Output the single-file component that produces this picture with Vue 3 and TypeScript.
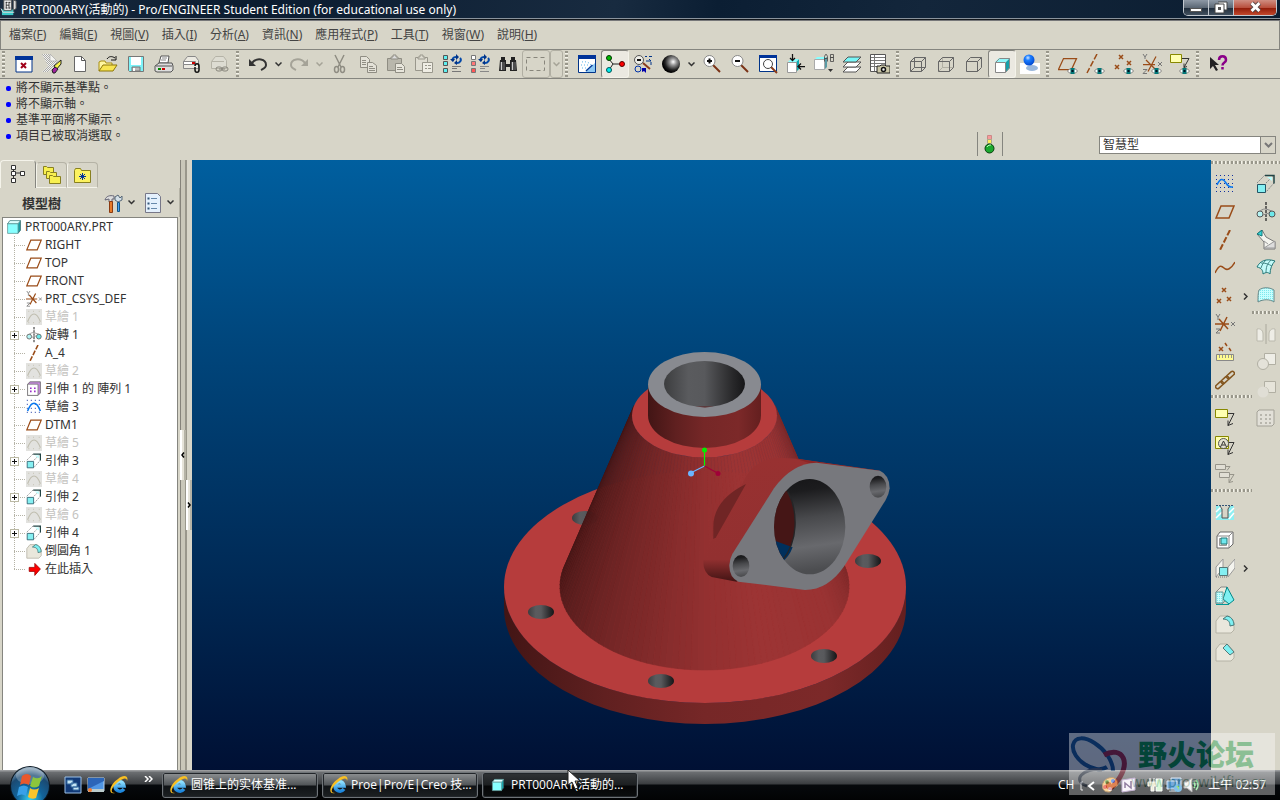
<script setup lang="ts">
import { ref } from 'vue'

interface Tool { id: string; label: string; chev?: boolean; off?: boolean; pressed?: boolean; boxed?: boolean }
interface Row { icon: string; text: string; plus?: boolean; dim?: boolean }

const menus: [string, string][] = [
  ['檔案', 'F'], ['編輯', 'E'], ['視圖', 'V'], ['插入', 'I'], ['分析', 'A'],
  ['資訊', 'N'], ['應用程式', 'P'], ['工具', 'T'], ['視窗', 'W'], ['說明', 'H'],
]

const groups: Tool[][] = [
  [
    { id: 'closewin', label: 'Close window' }, { id: 'erase', label: 'Erase' }, { id: 'new', label: 'New' },
    { id: 'open', label: 'Open' }, { id: 'save', label: 'Save' }, { id: 'print', label: 'Print' },
    { id: 'mail', label: 'Mail' }, { id: 'maillink', label: 'Mail link', off: true },
  ],
  [
    { id: 'undo', label: 'Undo', chev: true }, { id: 'redo', label: 'Redo', chev: true, off: true },
    { id: 'cut', label: 'Cut', off: true }, { id: 'copy', label: 'Copy', off: true },
    { id: 'paste', label: 'Paste', off: true }, { id: 'pastesp', label: 'Paste special', off: true },
    { id: 'regen', label: 'Regenerate' }, { id: 'regenm', label: 'Regenerate manager' },
    { id: 'find', label: 'Find' }, { id: 'selbox', label: 'Select box', chev: true, off: true, boxed: true },
  ],
  [
    { id: 'repaint', label: 'Repaint' }, { id: 'spin', label: 'Spin center', pressed: true },
    { id: 'orient', label: 'Orient mode' }, { id: 'sphere', label: 'Appearance', chev: true },
    { id: 'zoomin', label: 'Zoom in' }, { id: 'zoomout', label: 'Zoom out' }, { id: 'refit', label: 'Refit' },
    { id: 'reorient', label: 'Reorient' }, { id: 'views', label: 'Saved views' }, { id: 'layers', label: 'Layers' },
    { id: 'viewmgr', label: 'View manager' },
  ],
  [
    { id: 'wire', label: 'Wireframe' }, { id: 'hidden', label: 'Hidden line' }, { id: 'nohidden', label: 'No hidden' },
    { id: 'shade', label: 'Shading', pressed: true }, { id: 'render', label: 'Enhanced realism' },
  ],
  [
    { id: 'planeeye', label: 'Planes' }, { id: 'axiseye', label: 'Axes' }, { id: 'ptseye', label: 'Points' },
    { id: 'csyseye', label: 'Coordinate systems' }, { id: 'noteeye', label: 'Annotations' },
  ],
  [{ id: 'help', label: 'Context help' }],
]

const messages = ['將不顯示基準點。', '將不顯示軸。', '基準平面將不顯示。', '項目已被取消選取。']

const rows: Row[] = [
  { icon: 'plane', text: 'RIGHT' }, { icon: 'plane', text: 'TOP' }, { icon: 'plane', text: 'FRONT' },
  { icon: 'csys', text: 'PRT_CSYS_DEF' }, { icon: 'sketchoff', text: '草繪 1', dim: true },
  { icon: 'revolve', text: '旋轉 1', plus: true }, { icon: 'axis', text: 'A_4' },
  { icon: 'sketchoff', text: '草繪 2', dim: true }, { icon: 'pattern', text: '引伸 1 的 陣列 1', plus: true },
  { icon: 'sketchs', text: '草繪 3' }, { icon: 'plane', text: 'DTM1' },
  { icon: 'sketchoff', text: '草繪 5', dim: true }, { icon: 'extrude', text: '引伸 3', plus: true },
  { icon: 'sketchoff', text: '草繪 4', dim: true }, { icon: 'extrude', text: '引伸 2', plus: true },
  { icon: 'sketchoff', text: '草繪 6', dim: true }, { icon: 'extrude', text: '引伸 4', plus: true },
  { icon: 'round', text: '倒圓角 1' }, { icon: 'insert', text: '在此插入' },
]

const datum: Tool[][] = [
  [
    { id: 'sketch', label: 'Sketch' }, { id: 'plane', label: 'Plane' }, { id: 'axis', label: 'Axis' },
    { id: 'curve', label: 'Curve' }, { id: 'pts', label: 'Point', chev: true }, { id: 'csys', label: 'Csys' },
    { id: 'analysis', label: 'Analysis' }, { id: 'chain', label: 'Reference' },
  ],
  [{ id: 'note', label: 'Note' }, { id: 'notea', label: 'Annotation' }, { id: 'noteb', label: 'Propagate', off: true }],
  [
    { id: 'hole', label: 'Hole' }, { id: 'shell', label: 'Shell' }, { id: 'rib', label: 'Rib', chev: true },
    { id: 'draft', label: 'Draft' }, { id: 'round', label: 'Round' }, { id: 'chamfer', label: 'Chamfer' },
  ],
]
const features: Tool[][] = [
  [
    { id: 'extrude', label: 'Extrude' }, { id: 'revolve', label: 'Revolve' }, { id: 'sweep', label: 'Sweep' },
    { id: 'boundary', label: 'Boundary blend' }, { id: 'style', label: 'Style' },
  ],
  [
    { id: 'mirror', label: 'Mirror', off: true }, { id: 'merge', label: 'Merge', off: true },
    { id: 'trim', label: 'Trim', off: true }, { id: 'patterng', label: 'Pattern', off: true },
  ],
]

const filter = ref('智慧型')

const tasks = [
  { icon: 'ie', text: '圆锥上的实体基准...', active: false },
  { icon: 'ie', text: 'Proe|Pro/E|Creo 技...', active: false },
  { icon: 'part', text: 'PRT000ARY(活動的...', active: true },
]

/* Lateral surface of the cone, shaded strip by strip from left to right. */
const stops: [number, number[]][] = [
  [0, [66, 21, 21]], [0.12, [86, 28, 28]], [0.3, [116, 38, 38]], [0.5, [146, 48, 48]],
  [0.62, [156, 52, 52]], [0.8, [154, 51, 51]], [1, [122, 40, 40]],
]
function tone(u: number): string {
  let i = 1
  while (i < stops.length - 1 && u > stops[i][0]) i++
  const [a, ca] = stops[i - 1]
  const [b, cb] = stops[i]
  const k = (u - a) / (b - a)
  return 'rgb(' + ca.map((c, n) => Math.round(c + (cb[n] - c) * k)).join(',') + ')'
}
function pt(rx: number, ry: number, cy: number, deg: number): string {
  const r = (deg * Math.PI) / 180
  return (704.5 + rx * Math.cos(r)).toFixed(2) + ',' + (cy + ry * Math.sin(r)).toFixed(2)
}
const N = 80
const strips = Array.from({ length: N }, (_, i) => {
  const a = 194 - (208 * i) / N
  const b = 194 - (208 * (i + 1)) / N
  return {
    points: [pt(72.5, 42, 415.5, a), pt(144.5, 83.5, 586.5, a), pt(144.5, 83.5, 586.5, b), pt(72.5, 42, 415.5, b)].join(' '),
    fill: tone((i + 0.5) / N),
  }
})
const holes = [[585, 518], [541, 612], [661, 681], [824, 656], [868, 561]]
</script>

<template>
  <div class="desktop">
    <svg class="defs" aria-hidden="true">
      <defs>
        <radialGradient id="gSphere" cx=".62" cy=".38" r=".6"><stop offset="0" stop-color="#fff" /><stop offset=".3" stop-color="#999" /><stop offset=".75" stop-color="#222" /><stop offset="1" stop-color="#000" /></radialGradient>
        <radialGradient id="gBlue" cx=".4" cy=".3" r=".7"><stop offset="0" stop-color="#cfe6ff" /><stop offset=".35" stop-color="#1b7dff" /><stop offset="1" stop-color="#0048d0" /></radialGradient>
        <linearGradient id="gIe" x2="0" y2="1"><stop offset="0" stop-color="#8fe0ff" /><stop offset="1" stop-color="#1c86dc" /></linearGradient>
        <radialGradient id="gOrb" cx=".5" cy=".85" r=".85"><stop offset="0" stop-color="#35d0f0" /><stop offset=".4" stop-color="#12639a" /><stop offset=".75" stop-color="#1b4a72" /><stop offset="1" stop-color="#9fb4c4" /></radialGradient>
        <pattern id="pDither" width="2" height="2" patternUnits="userSpaceOnUse"><rect width="2" height="2" fill="#f4f4f0" /><rect width="1" height="1" fill="#aaa" /><rect x="1" y="1" width="1" height="1" fill="#aaa" /></pattern>
        <pattern id="pCyan" width="2" height="2" patternUnits="userSpaceOnUse"><rect width="2" height="2" fill="#c8ffff" /><rect width="1" height="1" fill="#7de8ee" /></pattern>
        <pattern id="pDots" width="4" height="4" patternUnits="userSpaceOnUse"><rect x="1" y="1" width="1" height="1" fill="#1030a0" /></pattern>
        <pattern id="pDotsBig" width="5" height="5" patternUnits="userSpaceOnUse"><rect x="1" y="1" width="1.250" height="1.250" fill="#1030a0" /></pattern>
      </defs>

      <symbol id="eye" viewBox="0 0 10 6"><path d="M0 3 2 1h6l2 2-2 2H2z" fill="#fff" stroke="#666" stroke-width=".8" /><path d="M3 0h4v6H3z" fill="#077" /><path d="M4 2h2v2H4z" fill="#012" /></symbol>

      <symbol id="closewin" viewBox="0 0 20 20"><path d="M2 3h16v15H2z" fill="#fff" stroke="#038" /><path d="M1 2h18v4H1z" fill="#039" /><path d="m7 9 5 5m0-5-5 5" stroke="#a00018" stroke-width="2" /></symbol>
      <symbol id="erase" viewBox="0 0 20 20"><path d="M0 0h8l8 8-7 7-3 3H0l6-6z" fill="url(#pDither)" /><path d="M8 0v7h7z" fill="#f4f4f0" stroke="#aaa" stroke-width=".7" /><path d="m12 12 7-6v4l-5 6z" fill="#f7f24a" stroke="#222" /><path d="m10 16 3-3 3 2-3 4h-2z" fill="#a020a0" stroke="#222" /></symbol>
      <symbol id="new" viewBox="0 0 20 20"><path d="M4.500 2.500h7l4 4v11h-11z" fill="#fff" stroke="#666" /><path d="M11.500 2.500v4h4" fill="none" stroke="#555" /></symbol>
      <symbol id="open" viewBox="0 0 20 20"><path d="M1 17V8l2-1h4l1 2h6v3" fill="#fff6a0" stroke="#a88e10" /><path d="m1 17 4-6h14l-4 6z" fill="#f8e552" stroke="#8d7608" /><path d="M9 5c2-3 5-3 8-1m1-2v4h-5" fill="none" stroke="#111" /></symbol>
      <symbol id="save" viewBox="0 0 20 20"><path d="M2.500 2.500h15v15h-14l-1-1z" fill="#7df3f8" stroke="#777" /><path d="M5 3h10v8H5z" fill="#fff" /><path d="M6 13h8v4H6z" fill="#bbb" stroke="#777" /><path d="M7 14h2v3H7z" fill="#fff" /></symbol>
      <symbol id="print" viewBox="0 0 20 20"><path d="M5 9 7 2h8l-1 7z" fill="#fff" stroke="#555" /><path d="M8 4h5M7 6h5" stroke="#888" /><path d="m1 12 4-3h13l1 3v4l-2 2H3l-2-1z" fill="#ddd" stroke="#555" /><path d="M2 12h16" stroke="#555" /><path d="M4 15h3" stroke="#080" stroke-width="2" /><path d="M8 15h3" stroke="#c00" stroke-width="2" /></symbol>
      <symbol id="mail" viewBox="0 0 20 20"><path d="M1.500 7.500l4-5h8l3 4v8h-15z" fill="#eceae2" stroke="#888" /><path d="M1.500 7.500h12v3h-12z" fill="#fff" stroke="#888" /><path d="M10 9h3" stroke="#c00" stroke-width="2" /><path d="M13 12c0-3 4-3 4 0v4c0 3-4 3-4 0v-3" fill="none" stroke="#111" stroke-width="1.500" /></symbol>
      <symbol id="maillink" viewBox="0 0 20 20"><path d="M1.500 7.500l4-5h8l3 4v8h-15z" fill="#dddcd2" stroke="#b5b3a7" /><path d="M2 7.500h12" stroke="#b5b3a7" /><rect x="6" y="13" width="6" height="4" rx="2" fill="none" stroke="#88867c" /><rect x="12" y="13" width="6" height="4" rx="2" fill="none" stroke="#88867c" /><path d="M9 15h6" stroke="#88867c" /></symbol>
      <symbol id="undo" viewBox="0 0 20 20"><path d="M1 5v7h7z" fill="#333" /><path d="M4 9c5-6 14-4 14 2 0 3-3 4-5 5" fill="none" stroke="#333" stroke-width="2" /></symbol>
      <symbol id="redo" viewBox="0 0 20 20"><path d="M19 5v7h-7z" fill="#a5a398" /><path d="M16 9C11 3 2 5 2 11c0 3 3 4 5 5" fill="none" stroke="#a5a398" stroke-width="2" /></symbol>
      <symbol id="cut" viewBox="0 0 20 20"><g fill="none" stroke="#8f8d83" stroke-width="1.500"><path d="m5 1 6 12M14 1 8 13" /><ellipse cx="6.500" cy="15.500" rx="2" ry="3" /><ellipse cx="12.500" cy="15.500" rx="2" ry="3" /></g></symbol>
      <symbol id="copy" viewBox="0 0 20 20"><g fill="#e4e2d8" stroke="#8f8d83"><path d="M2.500 2.500h6l3 3v8h-9z" /><path d="M9.500 8.500h5l4 3v7h-9z" /><path d="M4 6.500h4M4 8.500h4M4 10.500h4M11 12.500h4M11 14.500h6M11 16.500h6" /></g></symbol>
      <symbol id="paste" viewBox="0 0 20 20"><g fill="#b9b7ac" stroke="#8f8d83"><path d="M1.500 4.500h14v12h-14z" /><path d="M5 5V3h2V1h3v2h2v2z" fill="#ddd" /><path d="M9.500 9.500h6l3 3v6h-9z" fill="#e8e6dc" /><path d="M11 13.500h5M11 15.500h6" /></g></symbol>
      <symbol id="pastesp" viewBox="0 0 20 20"><g fill="#dedcd1" stroke="#99978c"><path d="M1.500 3.500h12v13h-12z" /><path d="M4 5V3h2V1h3v2h2v2z" /><path d="M8.500 8.500h10v10h-10z" fill="#efede4" /><path d="M11 11.500h2M14 11.500h3M11 14.500h2M14 14.500h3" /></g></symbol>
      <symbol id="regen" viewBox="0 0 20 20"><g fill="#5df0f0" stroke="#555"><path d="M1.500 1.500h4v4h-4zM1.500 7.500h4v4h-4zM1.500 14.500h4v4h-4z" /></g><path d="M11 7c-1-2 0-4 3-4m4 1c2 2 0 5-3 5" fill="none" stroke="#0348a8" stroke-width="2" /><path d="m14 0 3 3-3 3zM15 6l-3 3 3 2zM8 5h5l-2 3z" fill="#038" /><path d="M10 12.500h9M10 14.500h5M10 17.500h9" stroke="#777" /></symbol>
      <symbol id="regenm" viewBox="0 0 20 20"><g stroke="#777"><path d="M1.500 1.500h4v4h-4z" fill="#fff" /><path d="M1.500 7.500h4v4h-4z" fill="#f77" /><path d="M1.500 14.500h4v4h-4z" fill="#f55" /></g><path d="M11 7c-1-2 0-4 3-4m4 1c2 2 0 5-3 5" fill="none" stroke="#0348a8" stroke-width="2" /><path d="m14 0 3 3-3 3zM15 6l-3 3 3 2zM8 5h5l-2 3z" fill="#038" /><path d="M10 12.500h9M10 14.500h5M10 17.500h9" stroke="#888" /></symbol>
      <symbol id="find" viewBox="0 0 20 20"><path d="M3 3h4v3H3zM13 3h4v3h-4zM2 6h6v4h4V6h6l1 11h-7v-4H8v4H1z" fill="#222" /><path d="M3.500 8v8M14.500 8v8" stroke="#ccc" stroke-width="1.500" /><path d="M6 8v8M17 8v8" stroke="#777" /></symbol>
      <symbol id="selbox" viewBox="0 0 20 20"><rect x=".5" y="3.500" width="18" height="13" fill="none" stroke="#88867c" stroke-dasharray="4 3" /></symbol>

      <symbol id="repaint" viewBox="0 0 20 20"><path d="M1.500 2.500h17v16h-17z" fill="#fff" stroke="#038" /><path d="M1 1h18v4H1z" fill="#039" /><path d="M8 18c5-2 6-6 10-9v9z" fill="#8cc8f4" /><path d="M5 8c4-1 8 1 9 3m-10 0h8m-7 3h6" fill="none" stroke="#58b4e8" stroke-dasharray="1 2" /><path d="M15.500 11 9 17" stroke="#003c9c" stroke-width="1.500" /></symbol>
      <symbol id="spin" viewBox="0 0 20 20"><path d="m4 5 4 5-4 6m4-6h9" fill="none" stroke="#222" /><circle cx="4" cy="4" r="2.500" fill="#0b0" stroke="#030" /><circle cx="17" cy="10" r="2.500" fill="#f00" stroke="#500" /><circle cx="4" cy="16" r="2.500" fill="#0ee" stroke="#055" /></symbol>
      <symbol id="orient" viewBox="0 0 20 20"><path d="m10 9 7 6" stroke="#8a3c1a" stroke-width="2" /><circle cx="6" cy="6" r="4.500" fill="#eeeee8" stroke="#555" /><path d="M4 6h4" stroke="#111" stroke-width="2" /><path d="M12 2.500h2m2 0h3M13 7h5l-2-2m2 3v3" fill="none" stroke="#038" /><circle cx="5" cy="15" r="3" fill="none" stroke="#03a" /><path d="M9 14h4v5l-2-2-2 1z" fill="#00a" /></symbol>
      <symbol id="sphere" viewBox="0 0 20 20"><circle cx="10" cy="10" r="9" fill="url(#gSphere)" /></symbol>
      <symbol id="zoomin" viewBox="0 0 20 20"><path d="m11 11 7 7" stroke="#7a3216" stroke-width="2" /><circle cx="7.500" cy="7" r="5.500" fill="#fff" stroke="#888" /><path d="M5 7h5M7.500 4.500v5" stroke="#111" stroke-width="2" /></symbol>
      <symbol id="zoomout" viewBox="0 0 20 20"><path d="m11 11 7 7" stroke="#7a3216" stroke-width="2" /><circle cx="7.500" cy="7" r="5.500" fill="#fff" stroke="#888" /><path d="M5 7h5" stroke="#111" stroke-width="2" /></symbol>
      <symbol id="refit" viewBox="0 0 20 20"><path d="M1.500 2.500h17v15h-17z" fill="#fff" stroke="#038" /><path d="M1 1h18v3H1z" fill="#039" /><path d="m13 13 6 6" stroke="#8a3c1a" stroke-width="2" /><circle cx="10" cy="10" r="4.500" fill="#fff" stroke="#444" /></symbol>
      <symbol id="reorient" viewBox="0 0 20 20"><path d="m10 8 3-3v10l-3 3z" fill="#10aab0" /><path d="m2 8 3-3h8l-3 3z" fill="#8ff" /><path d="M1.500 8.500h9v10h-9z" fill="#fff" stroke="#999" /><path d="M6.500 0v6M4 4l2.500 2.500L9 4M19 12.500h-6m2-3-3 3 3 3" fill="none" stroke="#111" stroke-width="1.250" /></symbol>
      <symbol id="views" viewBox="0 0 20 20"><path d="m1 5 2-2h9l-2 2z" fill="#8ff" /><path d="m10 5 3-2v10l-3 3z" fill="#5a9aa4" /><path d="M.5 5.500h10v10H.5z" fill="#fff" stroke="#aaa" /><path d="M10.500 7.500v-5l1-2h1l1 2v5m-3-3h3M16.500 7.500v-7h3v3h-3 3v4z" fill="none" stroke="#444" stroke-width=".8" /><path d="M14 15h5l-2.500 3z" fill="#333" /></symbol>
      <symbol id="layers" viewBox="0 0 20 20"><g stroke="#555"><path d="m1 18 5-5h13l-5 5z" fill="#fff" /><path d="m1 13 5-5h13l-5 5z" fill="#fff" /><path d="m1 8 5-5h13l-5 5z" fill="#79f6f6" /></g></symbol>
      <symbol id="viewmgr" viewBox="0 0 20 20"><path d="M.500.500h15v17H.5z" fill="#fff" stroke="#555" /><path d="M4.500 1v16M1 3.500h14M1 6.500h14M1 9.500h14M1 12.500h14" stroke="#777" /><path d="M7 12h3l1-1h4l1 1h4v7H7z" fill="#ccc8a8" stroke="#222" /><circle cx="13.500" cy="15.500" r="2" fill="#eee" stroke="#111" stroke-width="1.500" /></symbol>
      <symbol id="wire" viewBox="0 0 20 20"><path d="M2.500 7.500h11v10h-11zM6.500 3.500h11v10h-11zM2.500 7.500l4-4m7 4 4-4m-4 14 4-4m-15 4 4-4" fill="none" stroke="#666" /></symbol>
      <symbol id="hidden" viewBox="0 0 20 20"><path d="M6.500 3.500v10h11m-15 4 4-4" fill="none" stroke="#b1afa3" /><path d="M2.500 7.500h11v10h-11zM6.500 3.500h11v10M2.500 7.500l4-4m7 4 4-4m-4 14 4-4" fill="none" stroke="#666" /></symbol>
      <symbol id="nohidden" viewBox="0 0 20 20"><path d="M2.500 7.500h11v10h-11zM6.500 3.500h11v10M2.500 7.500l4-4m7 4 4-4m-4 14 4-4" fill="none" stroke="#666" /></symbol>
      <symbol id="shade" viewBox="0 0 20 20"><path d="m3 8 4-4h11l-4 4z" fill="#91f7fa" /><path d="m14 8 4-4v10l-4 4z" fill="#16a0aa" /><path d="m3.500 8.500 4-4h10v9l-4 5" fill="none" stroke="#888" /><path d="M3.500 8.500h10v10h-10z" fill="#fff" stroke="#888" /></symbol>
      <symbol id="render" viewBox="0 0 20 20"><path d="M0 9h20v11H0z" fill="#fff" /><ellipse cx="12" cy="14" rx="6" ry="3" fill="#9ab8dc" /><circle cx="9" cy="6" r="5.500" fill="url(#gBlue)" /></symbol>
      <symbol id="planeeye" viewBox="0 0 20 20"><path d="M5.500 4.500h13l-5 11h-13z" fill="none" stroke="#9a4c18" stroke-width="1.250" /><use href="#eye" x="9" y="14" width="11" height="6" /></symbol>
      <symbol id="axiseye" viewBox="0 0 20 20"><path d="M11 0 1 19" stroke="#9a4c18" stroke-width="1.500" stroke-dasharray="6 2" /><use href="#eye" x="8" y="14" width="11" height="6" /></symbol>
      <symbol id="ptseye" viewBox="0 0 20 20"><path d="m5 1 4 4m0-4L5 5m8 2 4 4m0-4-4 4M1 11l4 4m0-4-4 4" stroke="#9a4c18" stroke-width="1.500" /><use href="#eye" x="9" y="14" width="11" height="6" /></symbol>
      <symbol id="csyseye" viewBox="0 0 20 20"><path d="M1 10.500h12m1-8-8 15M4 6l9 9" fill="none" stroke="#9a4c18" stroke-width="1.250" /><path d="m1 0 2 3 2-3M3 3v2m13 3 4 4m0-4-4 4M1 15.500h4l-4 4h4" fill="none" stroke="#777" /><use href="#eye" x="9" y="14" width="11" height="6" /></symbol>
      <symbol id="noteeye" viewBox="0 0 20 20"><path d="M.500.500h11v8H.5z" fill="#ffffb0" stroke="#888800" /><path d="M12 4.500h7l-5 9m0-4v4l3-1" fill="none" stroke="#333" /><use href="#eye" x="9" y="14" width="11" height="6" /></symbol>
      <symbol id="help" viewBox="0 0 20 20"><path d="M2 3v12l3-3 3 5 2-1-3-5h4z" fill="#222" /><path d="M11 6c0-5 7-5 7 0 0 3-3.500 2-3.500 5.500M14.500 13v2.500" fill="none" stroke="#8a0088" stroke-width="2.500" /></symbol>

      <symbol id="sketch" viewBox="0 0 20 20"><path d="M0 0h19v19H0z" fill="url(#pDots)" /><path d="M2 11c3-7 6-7 9-2s5 4 7 4" fill="none" stroke="#0878f0" stroke-width="1.500" /></symbol>
      <symbol id="sketchs" viewBox="0 0 20 20"><path d="M0 0h20v20H0z" fill="url(#pDotsBig)" /><path d="M2 15c5-13 11-13 16 0" fill="none" stroke="#0878f0" stroke-width="2" /></symbol>
      <symbol id="sketchoff" viewBox="0 0 20 20"><path d="M0 0h20v20H0z" fill="#e2e2df" /><path d="M2 16c5-13 11-13 16 0" fill="none" stroke="#c0beb0" stroke-width="1.500" /><path d="M3 3h1m5 0h1m6 0h1M3 17h1m5 0h1m6 0h1" stroke="#c6c4b6" stroke-width="1.500" /></symbol>
      <symbol id="plane" viewBox="0 0 20 20"><path d="M6 4h13l-5 12H1z" fill="none" stroke="#9a4c18" stroke-width="1.500" /></symbol>
      <symbol id="axis" viewBox="0 0 20 20"><path d="M15 0 5 20" stroke="#9a4c18" stroke-width="2" stroke-dasharray="6 2" /></symbol>
      <symbol id="curve" viewBox="0 0 20 20"><path d="M0 15c4-8 6-8 9-5s7 1 11-6" fill="none" stroke="#9a4c18" stroke-width="1.500" /></symbol>
      <symbol id="pts" viewBox="0 0 20 20"><path d="m7 2 4 4m0-4L7 6m5 5 4 4m0-4-4 4M2 13l4 4m0-4-4 4" stroke="#9a4c18" stroke-width="1.500" /></symbol>
      <symbol id="csys" viewBox="0 0 20 20"><path d="M0 10h14M12 3 5 17M4 5l9 10" stroke="#9a4c18" stroke-width="1.500" /><path d="m1 0 2 3 2-3M3 3v3m13 2 4 4m0-4-4 4M1 15h4l-4 4h4" fill="none" stroke="#777" /></symbol>
      <symbol id="analysis" viewBox="0 0 20 20"><path d="m4 5 4 4m0-4L4 9m6-8 2 3m2 2 2 3" stroke="#9a4c18" stroke-width="1.500" /><path d="M1.500 12.500h17v6h-17z" fill="#fffb90" stroke="#888" /><path d="M4.500 13v3m3-3v3m3-3v3m3-3v3m3-3v3" stroke="#998" /></symbol>
      <symbol id="chain" viewBox="0 0 20 20"><g fill="none" stroke="#83551e" stroke-width="1.500"><rect x="0" y="13" width="9" height="4" rx="2" transform="rotate(-42 4.500 15)" /><rect x="5.500" y="8" width="9" height="4" rx="2" transform="rotate(-42 10 10)" /><rect x="11" y="3" width="9" height="4" rx="2" transform="rotate(-42 15.500 5)" /></g></symbol>
      <symbol id="note" viewBox="0 0 20 20"><path d="M.500 1.500h12v8H.5z" fill="#ffffb0" stroke="#888800" /><path d="M13 5.500h6l-6 12m0-5v5l5-2" fill="none" stroke="#333" /></symbol>
      <symbol id="notea" viewBox="0 0 20 20"><path d="M.500.500h13v12H.5z" fill="#ffffb0" stroke="#888800" /><circle cx="8.500" cy="7.500" r="5" fill="#e4e2d2" stroke="#555" /><path d="m5.500 11 3-6 3 6M7 9h3M14 6.500h5l-6 12m0-5v5l5-2" fill="none" stroke="#333" /></symbol>
      <symbol id="noteb" viewBox="0 0 20 20"><g fill="#e0ded4" stroke="#96948a"><path d="M.500.500h10v5H.5zM4.500 8.500h10v5h-10z" /><path d="M11 2.500h4l-3 4M15 10.500h4l-5 8m0-4v4l4-1" fill="none" /></g></symbol>
      <symbol id="hole" viewBox="0 0 20 20"><path d="M1 4h4l2 3v9h6V7l2-3h4v14H1z" fill="#8eeff2" /><path d="m1 10 5-5M1 16l6-6m7 7 5-6m-5 0 5-5" stroke="#fff" stroke-width="1.500" /><path d="M5 4l2 3v9h6V7l2-3" fill="none" stroke="#555" /><path d="M1 3.500h18" stroke="#357" stroke-dasharray="2 1" /></symbol>
      <symbol id="shell" viewBox="0 0 20 20"><path d="m2 6 3-4h13v12l-4 4H2z" fill="#fff" stroke="#666" /><path d="M2 6h12l4-4m-4 4v12" fill="none" stroke="#888" /><path d="M4.500 8.500h7v7h-7z" fill="#d7d5c8" stroke="#999" /><path d="M6 8h6v6H6z" fill="#70e8ee" stroke="#277" /></symbol>
      <symbol id="rib" viewBox="0 0 20 20"><path d="m1 9 7-8v9l-7 9zM13 9l7-8v9l-7 9z" fill="#f4f4ee" stroke="#999" /><path d="M4.500 9.500h8v8h-8z" fill="#84eff2" stroke="#577" /><path d="M1 19h12" stroke="#777" stroke-dasharray="1 1" /></symbol>
      <symbol id="draft" viewBox="0 0 20 20"><path d="m1 6 5-5h6v12l-5 5H1z" fill="#eceadd" stroke="#888" /><path d="M12 1 8 13l6 5 5-4z" fill="#7ef0f2" stroke="#088" /><path d="M1 6h7v11H1z" fill="url(#pCyan)" stroke="#699" /><path d="M1 18.500h13" stroke="#099" /></symbol>
      <symbol id="round" viewBox="0 0 20 20"><path d="m1 7 4-5h8c5 3 6 6 6 9v5l-3 3H1z" fill="#e9e7dc" stroke="#b5b3a6" /><path d="m8 5 4-3c6 1 7 7 7 9l-4 1c0-3-1-7-7-7z" fill="#7ef0f2" stroke="#477" /></symbol>
      <symbol id="chamfer" viewBox="0 0 20 20"><path d="m1 7 4-5h7l7 8v6l-3 3H1z" fill="#e9e7dc" stroke="#b5b3a6" /><path d="m8 6 4-4 7 8-4 3z" fill="#7ef0f2" stroke="#577" /></symbol>
      <symbol id="extrude" viewBox="0 0 20 20"><path d="m1 9 8-8m9 8-8 9M10 9l8-8" fill="none" stroke="#888" stroke-dasharray="2 1" /><path d="M9 1.500h9v8" fill="none" stroke="#244" stroke-width="1.500" /><path d="M11 3h5v4z" fill="#bff" /><path d="M1.500 10.500h8v8h-8z" fill="#86f0f2" stroke="#256" /></symbol>
      <symbol id="revolve" viewBox="0 0 20 20"><path d="M10 0v20" stroke="#222" stroke-width="1.250" stroke-dasharray="3 1" /><circle cx="4" cy="12" r="3" fill="#b4f4f4" stroke="#555" /><circle cx="16" cy="12" r="3" fill="#6ee8ea" stroke="#555" /><path d="M4 9c3-2 4-2 6-2l6 2M7 13l6-2" fill="none" stroke="#888" /></symbol>
      <symbol id="sweep" viewBox="0 0 20 20"><path d="m1 4 5-4 4 7 9 5v7H8V12z" fill="#f4f4ee" stroke="#777" /><path d="m1 4 5-4v6z" fill="#36d6da" stroke="#177" /><path d="m8 18 11-7v7zM8 11l4 3" fill="#ddd" stroke="#999" /></symbol>
      <symbol id="boundary" viewBox="0 0 20 20"><path d="M1 9C4 3 10 0 19 3c-3 3-5 8-5 13-2-2-4-2-7 0 0-3-1-6-6-7z" fill="#c4fafa" stroke="#277" /><path d="M10 2c-3 3-4 5-5 8m10-8c-4 4-5 7-5 13M5 5c5 0 7 1 11 3" fill="none" stroke="#488" /></symbol>
      <symbol id="style" viewBox="0 0 20 20"><path d="M3 4c4-3 10-3 15 0v12c-4-3-11-3-16 0 0-5 0-9 1-12z" fill="url(#pCyan)" stroke="#688" /></symbol>
      <symbol id="mirror" viewBox="0 0 20 20"><path d="M1 5c4-1 6 2 6 5v7H1zM19 5c-4-1-6 2-6 5v7h6z" fill="#eeede6" stroke="#bbb9ad" /><path d="M10 0v20" stroke="#aaa89c" /></symbol>
      <symbol id="merge" viewBox="0 0 20 20"><path d="M8.500 1.500h11v11h-11z" fill="#eeede6" stroke="#b1afa3" /><circle cx="7" cy="12" r="5.500" fill="#e4e2d9" stroke="#b1afa3" /></symbol>
      <symbol id="trim" viewBox="0 0 20 20"><path d="M8.500 1.500h11v11h-7c0-3-1-5-4-5z" fill="#e6e4da" stroke="#b1afa3" /><circle cx="7" cy="12" r="5.500" fill="#e0ded5" /></symbol>
      <symbol id="patterng" viewBox="0 0 20 20"><path d="m1 4 2-2h15v14l-2 2H1z" fill="#e2e0d8" stroke="#a3a197" /><path d="M4 7h2m3 0h2m2 0h2M4 11h2m3 0h2m2 0h2M4 15h2m3 0h2m2 0h2" stroke="#aaa89e" stroke-width="1.500" /></symbol>
      <symbol id="pattern" viewBox="0 0 20 20"><path d="m2 4 3-3h13v14l-3 3H2z" fill="#c68adc" stroke="#666" /><path d="M2 4h13v14H2z" fill="#fff" stroke="#777" /><path d="M5 9h2m3 0h2M5 13h2m3 0h2" stroke="#9a30c8" stroke-width="2" /></symbol>
      <symbol id="insert" viewBox="0 0 20 20"><path d="M4 8h7V3l7 7-7 8v-5H4z" fill="#f00" stroke="#900" /></symbol>
      <symbol id="part" viewBox="0 0 20 20"><path d="m2 6 3-4h13v12l-3 4z" fill="#19a3aa" stroke="#366" /><path d="m2 6 3-4h13l-3 4z" fill="#dff" stroke="#699" /><path d="M2 6h13v12H2z" fill="#8ff" stroke="#699" /></symbol>
      <symbol id="treetab" viewBox="0 0 20 20"><g fill="#fff" stroke="#333"><path d="M5.500 3v11m2-6h5" /><path d="M3.500.500h4v4h-4zM3.500 6.500h4v4h-4zM3.500 13.500h4v4h-4zM12.500 6.500h4v4h-4z" /></g></symbol>
      <symbol id="folders" viewBox="0 0 20 20"><g fill="#f8f050" stroke="#888020"><path d="M1.500 9.500v-8h3l1 1h6v7z" /><path d="M4.500 13.500v-7h3l1 1h6v6z" /><path d="M7.500 18.500v-8h3l1 1h7v7z" /></g></symbol>
      <symbol id="folderstar" viewBox="0 0 20 20"><path d="M1.500 17.500v-12l1-2h5l1 2h9v12z" fill="#fcf260" stroke="#888020" /><path d="M6 11.500h7M9.500 8v7M7 9l5 5m0-5-5 5" stroke="#00309c" /></symbol>
      <symbol id="tools" viewBox="0 0 20 20"><path d="M1 7c1-4 5-5 9-4v3H8v3H5V6z" fill="#ddd" stroke="#667" /><path d="M5.500 8.500h3v11h-3z" fill="#e87a28" stroke="#8a3a10" /><path d="M11 4v3l3 2 4-2V3l-2 2-2-3z" fill="#d4e0e8" stroke="#567" /><path d="M13.500 9.500h2v9h-2z" fill="#48a0f0" stroke="#158" /></symbol>
      <symbol id="list" viewBox="0 0 20 20"><path d="M2.500.500h12l3 3v16h-15z" fill="#e4f0fc" stroke="#778" /><path d="M8 5.500h6M8 10.500h6M8 15.500h6" stroke="#68a" /><path d="M4.500 5.500h2M4.500 10.500h2M4.500 15.500h2" stroke="#357" stroke-width="2" /></symbol>

      <symbol id="ie" viewBox="0 0 20 20"><path d="M15 14c-3 4-9 2-9-3s8-6 9 0H6" fill="none" stroke="url(#gIe)" stroke-width="3.500" /><path d="M6 18C-2 20 1 9 9 4c6-5 11-3 9 2 0-4-4-3-9 1-6 5-9 11-3 11z" fill="#f8bf23" /></symbol>
      <symbol id="switch" viewBox="0 0 20 20"><path d="M2 2h16v16H2z" fill="#123a78" stroke="#9cc1e6" /><path d="M4 5h6v4H4zM8 8h6v4H8zM10 12h6v3h-6z" fill="#c4e4f4" stroke="#31679c" /></symbol>
      <symbol id="desk" viewBox="0 0 20 20"><path d="M2 3h16v13H2z" fill="#5096e4" stroke="#b8d2ec" /><path d="m2 14 16-8V3H2z" fill="#2b65b8" /><path d="M2 14h16v3H2z" fill="#bcc" /><circle cx="4" cy="15" r="2" fill="#ee7b32" /></symbol>
    </svg>

    <header class="title">
      <svg class="app-ic" viewBox="0 0 20 18"><path d="M2 10h12v6H2z" fill="#3ccaca" /><path d="M4 0h8v11H4z" fill="#f8f8f8" stroke="#555" /><path d="M6 2.500h2m1 0h2m-5 6h2m1 0h2M6.500 2v7m3-7v7m-3-3.500h3" stroke="#222" stroke-width=".9" /><path d="M14 0v11l3-2V1z" fill="#ddd" stroke="#555" /><path d="m1 9 2 4h12" fill="none" stroke="#ddd" /></svg>
      <h1>PRT000ARY(活動的) - Pro/ENGINEER Student Edition (for educational use only)</h1>
      <div class="winbtns">
        <button type="button" aria-label="Minimize"><svg viewBox="0 0 26 16"><rect x="7.500" y="8.500" width="11" height="3" fill="#fff" stroke="#555" /></svg></button>
        <button type="button" aria-label="Restore"><svg viewBox="0 0 26 16"><path d="M10 2h9v8h-2M7 4h9v9H7z" fill="#fff" stroke="#444" /><path d="M10 7h3v3h-3z" fill="#555" /></svg></button>
        <button type="button" class="close" aria-label="Close"><svg viewBox="0 0 42 16"><path d="m17 3 8 8m0-8-8 8" stroke="#544" stroke-width="5" /><path d="m17 3 8 8m0-8-8 8" stroke="#fff" stroke-width="3" /></svg></button>
      </div>
    </header>

    <nav class="menubar">
      <button v-for="m in menus" :key="m[1]" type="button">{{ m[0] }}(<u>{{ m[1] }}</u>)</button>
    </nav>

    <div class="toolbar">
      <div v-for="(g, gi) in groups" :key="gi" class="group">
        <span class="grip" />
        <div v-for="t in g" :key="t.id" class="tool" :class="{ boxed: t.boxed }">
          <button type="button" :class="{ pressed: t.pressed }" :aria-label="t.label" :disabled="t.off"><svg class="ic"><use :href="'#' + t.id" /></svg></button>
          <button v-if="t.chev" type="button" class="chev" :aria-label="t.label + ' options'" :disabled="t.off"><svg viewBox="0 0 7 5"><path d="m.500.500 3 3 3-3" /></svg></button>
        </div>
      </div>
    </div>

    <section class="messages">
      <ul><li v-for="m in messages" :key="m">{{ m }}</li></ul>
      <div class="status">
        <span class="signal"><svg viewBox="0 0 12 22"><path d="M3.500 2.500h4v4h-4z" fill="#f69a9a" stroke="#c88" /><path d="M3.500 6.500h4v4h-4z" fill="#ffef5a" stroke="#aa8" /><circle cx="5.500" cy="15.500" r="4.500" fill="#1ba82e" stroke="#063c0c" /><path d="M3 14c1-2 3-2 4-2" fill="none" stroke="#bfb" /></svg></span>
        <label class="filter">
          <select v-model="filter" aria-label="Selection filter"><option>智慧型</option></select>
          <span class="drop"><svg viewBox="0 0 9 6"><path d="m1 1 3.500 3.500L8 1" fill="none" stroke="#777" stroke-width="2" /></svg></span>
        </label>
      </div>
    </section>

    <main class="work">
      <aside class="side">
        <div class="tabs">
          <button type="button" class="on" aria-label="Model tree"><svg class="ic"><use href="#treetab" /></svg></button>
          <button type="button" aria-label="Folder browser"><svg class="ic"><use href="#folders" /></svg></button>
          <button type="button" aria-label="Favorites"><svg class="ic"><use href="#folderstar" /></svg></button>
        </div>
        <div class="head">
          <h2>模型樹</h2>
          <button type="button" class="hb" aria-label="Settings"><svg class="ic"><use href="#tools" /></svg><svg class="cv" viewBox="0 0 7 5"><path d="m.500.500 3 3 3-3" /></svg></button>
          <button type="button" class="hb" aria-label="Show"><svg class="ic"><use href="#list" /></svg><svg class="cv" viewBox="0 0 7 5"><path d="m.500.500 3 3 3-3" /></svg></button>
        </div>
        <div class="tree">
          <div class="root"><svg class="s"><use href="#part" /></svg>PRT000ARY.PRT</div>
          <ul>
            <li v-for="r in rows" :key="r.text" :class="{ dim: r.dim }">
              <span class="branch"><button v-if="r.plus" type="button" :aria-label="'Expand ' + r.text" /></span>
              <svg class="s"><use :href="'#' + r.icon" /></svg><span>{{ r.text }}</span>
            </li>
          </ul>
        </div>
      </aside>
      <div class="sash">
        <button type="button" class="grab left" aria-label="Collapse tree"><svg viewBox="0 0 4 6"><path d="M3 .5 1 3l2 2.500" /></svg></button>
        <button type="button" class="grab right" aria-label="Expand browser"><svg viewBox="0 0 4 6"><path d="m1 .5 2 2.500-2 2.500" /></svg></button>
      </div>

      <section class="viewport">
        <svg viewBox="192 160 1019 610">
          <defs>
            <linearGradient id="rim"><stop offset="0" stop-color="#421515" /><stop offset=".25" stop-color="#602020" /><stop offset=".5" stop-color="#762727" /><stop offset=".8" stop-color="#7c2929" /><stop offset="1" stop-color="#641f1f" /></linearGradient>
            <linearGradient id="bore"><stop offset="0" stop-color="#3c3d3f" /><stop offset=".3" stop-color="#5a5b5e" /><stop offset=".5" stop-color="#58595c" /><stop offset=".85" stop-color="#28282a" /><stop offset="1" stop-color="#161618" /></linearGradient>
            <linearGradient id="port" x2=".1" y2="1"><stop offset="0" stop-color="#161618" /><stop offset=".16" stop-color="#1c1c1e" /><stop offset=".45" stop-color="#48494c" /><stop offset=".75" stop-color="#68696d" /><stop offset="1" stop-color="#4c4d50" /></linearGradient>
            <linearGradient id="lobe" x2="0" y2="1"><stop offset="0" stop-color="#983131" /><stop offset=".82" stop-color="#923030" /><stop offset="1" stop-color="#421414" /></linearGradient>
            <clipPath id="portClip"><ellipse cx="989" cy="590" rx="107" ry="143" /></clipPath>
          </defs>
          <path d="M504 587A201 116 0 0 0 906 587V608A201 116 0 0 1 504 608Z" fill="url(#rim)" />
          <ellipse cx="705" cy="587" rx="201" ry="116" fill="#b63c3c" />
          <ellipse v-for="h in holes" :key="h[0]" :cx="h[0]" :cy="h[1]" rx="13" ry="7" fill="url(#bore)" />
          <polygon v-for="(s, i) in strips" :key="i" :points="s.points" :fill="s.fill" :stroke="s.fill" stroke-width=".6" />
          <ellipse cx="704.500" cy="415.500" rx="72.500" ry="42" fill="#b63c3c" />
          <path d="M648 384V415.500A56.500 32.500 0 0 0 761 415.500V384Z" fill="url(#rim)" />
          <ellipse cx="704.500" cy="384.500" rx="56.500" ry="32.500" fill="#888a90" />
          <ellipse cx="704.500" cy="384" rx="40.500" ry="23" fill="url(#bore)" />
          <path d="M695 406.500h19l-9 1z" fill="#5a1b1b" />
          <g transform="translate(480 330) scale(.33333)">
            <path d="M790 455Q820 385 900 383L952 386 1200 422 1000 480 770 755 695 741Q668 728 670 690 672 665 700 625Z" fill="url(#lobe)" />
            <path d="M798 462Q700 510 700 590V627L708 622Z" fill="#702525" />
            <path d="M948 386 1200 422 1100 412 990 400Z" fill="#8c2626" />
            <path d="M882 475Q935 400 1010 398L1200 422Q1229 435 1229 475 1227 493 1217 510L1095 705Q1045 780 975 780L775 755Q747 742 748 705 750 685 757 672Z" fill="#77787d" />
            <ellipse cx="989" cy="590" rx="107" ry="143" fill="url(#port)" />
            <g clip-path="url(#portClip)">
              <path d="M923 485Q948 530 945 590 942 650 906 692L860 720V460Z" fill="#451616" />
              <path d="M875 629 938 652Q928 680 904 698L870 700Z" fill="#00305d" />
              <path d="M923 485Q948 530 945 590 942 650 906 692" fill="none" stroke="#252527" stroke-width="4" />
            </g>
            <ellipse cx="783" cy="708" rx="25" ry="33" fill="url(#port)" />
            <ellipse cx="1194" cy="470" rx="25" ry="33" fill="url(#port)" />
          </g>
          <g stroke-width="1.200"><path d="M704.500 466V450" stroke="#0f0" /><path d="m704.500 466-14 7" stroke="#6bb5ff" /><path d="m704.500 466 13 7" stroke="#a00038" /></g>
          <circle cx="704.500" cy="450" r="2.500" fill="#0e0" /><circle cx="691" cy="473.500" r="3" fill="#6bb5ff" /><circle cx="718" cy="473.500" r="2.500" fill="#a00038" />
        </svg>
      </section>

      <aside class="palette">
        <span class="hgrip" />
        <div class="cols">
          <div class="col wide">
            <template v-for="(g, gi) in datum" :key="gi">
              <span v-if="gi" class="hgrip" />
              <div v-for="t in g" :key="t.id" class="tool">
                <button type="button" :aria-label="t.label" :disabled="t.off"><svg class="ic"><use :href="'#' + t.id" /></svg></button>
                <button v-if="t.chev" type="button" class="chev" :aria-label="t.label + ' flyout'"><svg viewBox="0 0 5 7"><path d="m1 .500 3 3-3 3" /></svg></button>
              </div>
            </template>
          </div>
          <div class="col">
            <template v-for="(g, gi) in features" :key="gi">
              <span v-if="gi" class="hgrip" />
              <div v-for="t in g" :key="t.id" class="tool">
                <button type="button" :aria-label="t.label" :disabled="t.off"><svg class="ic"><use :href="'#' + t.id" /></svg></button>
              </div>
            </template>
          </div>
        </div>
      </aside>
    </main>

    <footer class="taskbar">
      <button type="button" class="orb" aria-label="Start">
        <svg viewBox="0 0 42 34"><circle cx="21" cy="20" r="20" fill="#0a1722" /><circle cx="21" cy="20" r="19" fill="url(#gOrb)" /><ellipse cx="21" cy="10" rx="14" ry="8" fill="#fff" opacity=".25" /><path d="M13 10q5-4 9 0l-2 9q-5-3-9 0z" fill="#e8582c" /><path d="M24 11q5 3 9-1l-3 10q-5 3-9 0z" fill="#8cc63c" /><path d="M10 21q5-3 9 0l-2 9q-4-3-9 0z" fill="#38a0e8" /><path d="M21 22q4 3 9 0l-3 10q-4 2-8-1z" fill="#fbc52c" /></svg>
      </button>
      <div class="quick">
        <button type="button" aria-label="Switch windows"><svg class="ic"><use href="#switch" /></svg></button>
        <button type="button" aria-label="Show desktop"><svg class="ic"><use href="#desk" /></svg></button>
        <button type="button" aria-label="Internet Explorer"><svg class="ic"><use href="#ie" /></svg></button>
        <button type="button" class="more" aria-label="More"><svg viewBox="0 0 9 6"><path d="m1 0 3 3-3 3m4-6 3 3-3 3" fill="none" stroke="#fff" stroke-width="1.500" /></svg></button>
      </div>
      <div class="tasks">
        <button v-for="t in tasks" :key="t.text" type="button" :class="{ active: t.active }"><svg class="t"><use :href="'#' + t.icon" /></svg><span>{{ t.text }}</span></button>
      </div>
      <div class="tray">
        <span class="ch">CH</span>
        <svg class="arrow" viewBox="0 0 16 12"><path d="M3 3H1v8h2" fill="none" stroke="#ddd" /><path d="m14 3-5 4 5 4" fill="none" stroke="#fff" stroke-width="2" /></svg>
        <svg viewBox="0 0 18 16"><path d="M2 12C-1 4 8-1 13 1s5 8 1 9-3 5-6 5-5-1-6-3z" fill="#f5bd62" stroke="#9a6424" /><circle cx="6" cy="5" r="2" fill="#4a9a2c" /><circle cx="12" cy="4" r="2" fill="#2d6ae0" /><circle cx="4" cy="10" r="2" fill="#e03c28" /><circle cx="9" cy="12" r="2" fill="#fff" /></svg>
        <svg class="pad" viewBox="0 0 18 16"><path d="M3 3 16 1v12L3 15z" fill="#f4eef8" stroke="#a688ba" /><path d="M6 11V6l6 5V4" fill="none" stroke="#503068" stroke-width="1.500" /></svg>
        <svg viewBox="0 0 18 16"><path d="M9 2h6v12H9z" fill="#c8f4c4" stroke="#fff" /><path d="M3 1v4m4-4v4M1 5h8v4H7v5H4V9H1z" fill="#e8e4c0" stroke="#fff" /></svg>
        <svg viewBox="0 0 18 16"><path d="M6 1h10v8H6z" fill="#1860a8" stroke="#cde" /><path d="M2 4h10v8H2zM4 14h7" fill="#2478c8" stroke="#cde" /><circle cx="13" cy="11" r="4" fill="#3e9edc" /><path d="M11 9h3v4z" fill="#5cd046" /></svg>
        <svg viewBox="0 0 18 16"><path d="M1 5h3l5-4v14l-5-4H1z" fill="#f4f4f4" stroke="#888" /><path d="M11 5q2 3 0 6m2-8q4 5 0 10" fill="none" stroke="#7ee88a" stroke-width="1.500" /></svg>
        <time>上午 02:57</time>
      </div>
    </footer>

    <svg class="pointer" viewBox="0 0 14 21"><path d="M1 1v15l4-3 3 7 3-1-3-7h5z" fill="#fff" stroke="#222" /></svg>

    <div class="mark">
      <svg viewBox="0 0 62 58"><path d="M44 38C44 16 8-6 4 12c-2 14 22 30 34 22" fill="none" stroke="#1d5c9c" stroke-width="4" /><path d="M35 22c18-10 30 8 10 30-4 5-7 2-5-3" fill="none" stroke="#b8223c" stroke-width="5" /><path d="M33 37C14 34 2 48 18 53" fill="none" stroke="#6a7488" stroke-width="3" /></svg>
      <div><strong>野火论坛</strong><span>www.proewildfire.cn</span></div>
    </div>
  </div>
</template>

<style>
html, body { margin: 0; background: #d7d5c8; }
</style>

<style scoped>
.desktop { --face: #d7d5c8; --line: #85857f; position: relative; display: flex; flex-direction: column; height: 100vh; min-height: 700px; overflow: hidden; background: var(--face); color: #333; font: 12px/16px "Noto Sans", "Noto Sans CJK TC", sans-serif; }
.desktop * { box-sizing: border-box; }
.defs { position: absolute; width: 0; height: 0; }
button { border: 0; padding: 0; margin: 0; background: none; color: inherit; font: inherit; display: flex; align-items: center; justify-content: center; flex: none; }
svg { display: block; flex: none; }
ul { list-style: none; margin: 0; padding: 0; }
.ic { width: 20px; height: 20px; }

.title { display: flex; align-items: flex-start; height: 21px; flex: none; background: linear-gradient(100deg, #1a2b40 0%, #0b1c30 20%, #182b40 48%, #0b1e33 56%, #13263b 72%, #0b1d31 100%); border-bottom: 1px solid #77787a; box-shadow: inset 0 -1px #14181c, inset 0 -2px #8a939c; color: #fff; }
.app-ic { width: 19px; height: 17px; margin-right: 2px; }
.title h1 { margin: 0; font-size: 12px; font-weight: 400; line-height: 19px; flex: 1; white-space: nowrap; }
.winbtns { display: flex; margin-right: 3px; border: 1px solid #c2c8cf; border-top: 0; border-radius: 0 0 5px 5px; overflow: hidden; }
.winbtns button { width: 25px; height: 15px; background: linear-gradient(#8e99a6, #5d6976 50%, #1d2b3a 52%, #43515f); border-right: 1px solid #c2c8cf; }
.winbtns svg { width: 26px; height: 16px; }
.winbtns .close { width: 42px; border: 0; background: linear-gradient(#cf8e82, #b9503e 50%, #8f1a08 52%, #c2482c); }
.winbtns .close svg { width: 41px; }

.menubar { display: flex; gap: 13px; align-items: center; height: 29px; flex: none; padding-left: 8px; border: 1px solid var(--line); border-top: 0; color: #444; }
.menubar button { white-space: nowrap; display: block; }

.toolbar { display: flex; height: 29px; flex: none; align-items: stretch; border-bottom: 1px solid var(--line); }
.group { display: flex; }
.grip { width: 3px; margin: 1px 5px 1px 2px; background: repeating-linear-gradient(#99978b 0 2px, #f4f3ea 2px 3px, #d7d5c8 3px 4px); }
.tool { display: flex; }
.tool button { width: 28px; height: 28px; }
.tool button.chev { width: 13px; }
.tool .chev svg { width: 7px; height: 5px; }
.tool .chev svg[viewBox="0 0 5 7"] { width: 5px; height: 7px; }
.chev path, .cv path { fill: none; stroke: #333; stroke-width: 1.5; }
.chev:disabled path { stroke: #a5a397; }
.tool button.pressed { background: #ebe9e1; border: 1px solid #85857f; border-color: #85857f #f4f3ea #f4f3ea #85857f; border-radius: 3px; }
.boxed button { border: 1px solid #b1afa3; border-radius: 3px; }

.messages { display: flex; justify-content: space-between; align-items: flex-end; height: 81px; flex: none; }
.messages ul { align-self: flex-start; padding: 1px 0 0 6px; }
.messages li { display: flex; align-items: center; gap: 5px; height: 16px; line-height: 18px; }
.messages li::before { content: ""; width: 5px; height: 5px; border-radius: 2px; background: #00f; }
.status { display: flex; align-items: flex-end; padding: 0 4px 4px 0; }
.signal { display: flex; align-items: center; justify-content: center; width: 26px; height: 24px; margin-right: 96px; border: solid var(--line); border-width: 0 1px; }
.signal svg { width: 12px; height: 22px; }
.filter { display: flex; width: 177px; height: 18px; margin-bottom: 2px; border: 1px solid var(--line); background: #fff; }
.filter select { flex: 1; appearance: none; border: 0; outline: 0; padding: 0 3px; background: #fff; color: #333; font: inherit; line-height: 16px; }
.drop { display: flex; align-items: center; justify-content: center; width: 15px; border-left: 1px solid var(--line); background: var(--face); }
.drop svg { width: 9px; height: 6px; }

.work { flex: 1; display: flex; min-height: 0; }
.side { width: 180px; flex: none; display: flex; flex-direction: column; }
.tabs { display: flex; align-items: flex-end; height: 28px; flex: none; }
.tabs button { width: 31px; height: 26px; border: 1px solid #b5b3a6; border-color: #b5b3a6 #b5b3a6 #f4f3ea #f4f3ea; border-radius: 4px 4px 0 0; }
.tabs button.on { width: 36px; height: 28px; border-bottom: 0; border-color: #f4f3ea #85857f #fff #f4f3ea; }
.head { display: flex; align-items: center; height: 29px; flex: none; padding-left: 22px; border-right: 1px solid #b5b3a6; }
.head h2 { margin: 0; flex: 1; font-size: 13px; font-weight: 700; line-height: 16px; }
.hb { gap: 4px; margin-right: 5px; }
.hb + .hb { margin-left: 3px; }
.cv { width: 7px; height: 5px; }
.tree { flex: 1; margin: 0 2px; border: 1px solid var(--line); border-bottom: 0; background: #fff; overflow: hidden; white-space: nowrap; }
.tree .s { width: 16px; height: 16px; }
.root { display: flex; align-items: center; gap: 3px; height: 18px; padding-left: 3px; }
.tree li { position: relative; display: flex; align-items: center; height: 18px; padding-left: 5px; gap: 3px; }
.tree li::before { content: ""; align-self: flex-start; width: 1px; height: 18px; margin: 0 -10px 0 6px; background: repeating-linear-gradient(#b5b3a6 0 1px, #fff 1px 2px); }
.tree li:last-child::before { height: 9px; }
.branch { display: flex; align-items: center; width: 18px; height: 18px; margin-right: -3px; position: relative; background: repeating-linear-gradient(90deg, #b5b3a6 0 1px, #fff 1px 2px) 6px 9px / 12px 1px no-repeat; }
.branch button { width: 9px; height: 9px; margin-left: 2px; border: 1px solid #bbb9a4; background: linear-gradient(#111, #111) center / 5px 1px no-repeat, linear-gradient(#111, #111) center / 1px 5px no-repeat, #fff; }
.tree .dim { color: #c4c3bf; }
.sash { display: flex; width: 12px; flex: none; background: linear-gradient(90deg, #85837a 0 1px, #c9c7b9 1px 5px, #99978b 5px 7px, #d7d5c8 7px 12px); }
.grab { width: 6px; height: 50px; background: linear-gradient(90deg, #fff 0 2px, #e6e4da 2px 4px, #b5b3a6 4px); }
.grab svg { width: 4px; height: 6px; }
.grab path { fill: none; stroke: #000; stroke-width: 1.5; }
.grab.left { margin-top: 270px; }
.grab.right { margin-top: 320px; }

.viewport { flex: 1; min-width: 0; background: linear-gradient(#005f9f, #00467c 30%, #002a56 68%, #001034); }
.viewport svg { width: 100%; height: 100%; }

.palette { width: 69px; flex: none; }
.hgrip { display: block; height: 3px; background: repeating-linear-gradient(90deg, #99978b 0 2px, #f4f3ea 2px 3px, #d7d5c8 3px 4px); }
.palette > .hgrip { margin: 1px 0 6px; }
.cols { display: flex; }
.col { width: 28px; }
.col.wide { width: 41px; }
.col .hgrip { margin: 1px 0 6px; }

.taskbar { display: flex; align-items: center; height: 30px; flex: none; background: linear-gradient(#9a9c9e 0 1px, #6c6f72 2px, #3a3d40 14px, #06090c 15px, #020304 100%); color: #fff; font-family: "Open Sans", "Noto Sans CJK SC", sans-serif; }
.orb { position: relative; width: 42px; height: 34px; margin: -4px 0 0 9px; }
.orb svg { width: 42px; height: 34px; }
.quick { display: flex; align-items: center; gap: 3px; margin-left: 12px; }
.quick .more { width: 9px; margin: -12px 0 0 12px; }
.more svg { width: 9px; height: 6px; }
.tasks { display: flex; gap: 4px; margin-left: 9px; }
.tasks button { justify-content: flex-start; gap: 2px; width: 156px; height: 26px; padding: 0 6px; border: 1px solid #6f7478; border-radius: 3px; background: linear-gradient(#8f9294, #515558 12px, #101316 13px, #1c2022); white-space: nowrap; box-shadow: inset 0 0 0 1px #22262a; }
.tasks button.active { gap: 6px; background: linear-gradient(#303335, #1c1f21 12px, #050607 13px, #0b0d0e); }
.t { width: 20px; height: 20px; }
.tasks .active .t { width: 14px; height: 14px; margin-left: 2px; }
.tray { display: flex; align-items: center; margin-left: auto; padding-right: 14px; }
.tray svg { width: 18px; height: 16px; }
.tray .ch { margin-right: 6px; }
.tray .arrow { width: 16px; height: 12px; margin-right: 5px; }
.tray .pad { margin-right: 10px; }
.tray time { margin-left: 7px; }

.pointer { position: absolute; left: 567px; bottom: 10px; width: 14px; height: 21px; }
.mark { position: absolute; right: 5px; bottom: 5px; display: flex; gap: 7px; width: 206px; height: 62px; background: #fff; opacity: .37; color: #0c9b3c; pointer-events: none; font-family: "Noto Sans CJK SC", sans-serif; }
.mark svg { width: 62px; height: 58px; }
.mark strong { display: block; margin-top: 3px; font-size: 29px; font-weight: 900; line-height: 34px; }
.mark span { display: block; margin-left: -7px; color: #6a9a80; font-size: 14px; line-height: 22px; }
</style>
